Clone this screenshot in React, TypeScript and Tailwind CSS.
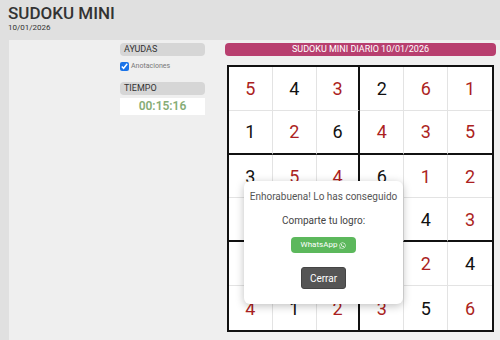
import React from "react";
import { FaWhatsapp } from "react-icons/fa";

const grid: [number | null, boolean][][] = [
  [[5, true], [4, false], [3, true], [2, false], [6, true], [1, true]],
  [[1, false], [2, true], [6, false], [4, true], [3, true], [5, true]],
  [[3, false], [5, true], [4, true], [6, false], [1, true], [2, true]],
  [[null, true], [null, false], [null, true], [null, false], [4, false], [3, true]],
  [[null, false], [null, true], [null, false], [null, true], [2, true], [4, false]],
  [[4, true], [1, false], [2, true], [3, true], [5, false], [6, true]],
];

export default function App() {
  return (
    <div
      className="relative w-[500px] h-[340px] overflow-hidden bg-[#e0e0e0] flex flex-col"
      style={{ fontFamily: "Roboto, 'Liberation Sans', sans-serif" }}
    >
      <div className="pl-2 pt-[3px] h-[40px]">
        <div className="text-[17px] leading-[20px] font-medium text-[#333]">SUDOKU MINI</div>
        <div className="text-[8px] leading-[9px] text-[#333]">10/01/2026</div>
      </div>
      <div className="ml-[9px] flex-1 bg-[#efefef] flex pt-[3px] pl-[111px]">
        <div className="w-[85px] flex flex-col">
          <div className="h-[13px] bg-[#d6d6d6] rounded-sm text-[9px] leading-[13px] text-[#333] pl-[4px]">AYUDAS</div>
          <div className="flex items-center mt-[5px] h-[10px] gap-[2px]">
            <input type="checkbox" checked readOnly className="w-[9px] h-[9px] m-0 accent-[#1a73e8]" />
            <span className="text-[7px] text-[#777]">Anotaciones</span>
          </div>
          <div className="h-[13px] mt-[11px] bg-[#d6d6d6] rounded-sm text-[9px] leading-[13px] text-[#333] pl-[4px]">TIEMPO</div>
          <div className="mt-[3px] h-[17px] bg-white text-center text-[12px] leading-[17px] font-semibold text-[#86ad76]">00:15:16</div>
        </div>
        <div className="ml-[20px] w-[271px] flex flex-col">
          <div className="h-[13px] bg-[#b83f6f] rounded-sm text-white text-[9px] leading-[13px] text-center">SUDOKU MINI DIARIO 10/01/2026</div>
          <div className="ml-[2px] mt-[9px] w-[267px] h-[267px] border-2 border-[#111] bg-white grid grid-cols-6 grid-rows-6">
            {grid.map((row, r) =>
              row.map(([n, red], c) => {
                const right = c === 5 ? "" : c === 2 ? "border-r-2 border-r-[#111]" : "border-r border-r-[#e3e3e3]";
                const bottom = r === 5 ? "" : r === 1 || r === 3 ? "border-b-2 border-b-[#111]" : "border-b border-b-[#e3e3e3]";
                return (
                  <div
                    key={`${r}-${c}`}
                    className={`flex items-center justify-center text-[18px] ${right} ${bottom} ${red ? "text-[#ac1f22]" : "text-[#111]"}`}
                  >
                    {n}
                  </div>
                );
              })
            )}
          </div>
        </div>
      </div>
      <div className="absolute left-[244px] top-[181px] w-[159px] h-[123px] bg-white rounded-[6px] shadow-[0_2px_8px_rgba(0,0,0,0.25)] flex flex-col items-center">
        <div className="mt-[9px] text-[10px] leading-[14px] text-[#555]">Enhorabuena! Lo has conseguido</div>
        <div className="mt-[10px] text-[10px] leading-[14px] text-[#444]">Comparte tu logro:</div>
        <div className="mt-[9px] w-[65px] h-[16px] bg-[#5cb85c] rounded-sm flex items-center justify-center gap-[2px] text-white text-[8px]">
          WhatsApp <FaWhatsapp className="w-[7px] h-[7px]" />
        </div>
        <div className="mt-[14px] w-[45px] h-[22px] bg-[#555] border border-[#444] rounded-[3px] flex items-center justify-center text-white text-[10px]">
          Cerrar
        </div>
      </div>
    </div>
  );
}
